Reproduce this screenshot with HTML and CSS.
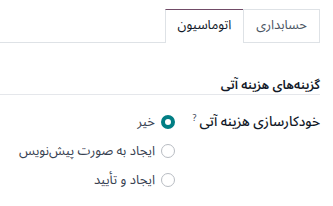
FILE: index.html
```html
<!DOCTYPE html>
<html lang="fa" dir="rtl">
<head>
<meta charset="utf-8">
<link rel="stylesheet" href="styles.css">
</head>
<body>

<div class="sheet">
  <ul class="tabs">
    <li class="tab">حسابداری</li>
    <li class="tab active">اتوماسیون</li>
  </ul>

  <div class="group">
    <h4 class="group-title">گزینه‌های هزینه آتی</h4>

    <div class="field">
      <label class="field-label">خودکارسازی هزینه آتی<sup>?</sup></label>
      <div class="radios">
        <label class="radio"><span class="dot checked"></span>خیر</label>
        <label class="radio"><span class="dot"></span>ایجاد به صورت پیش‌نویس</label>
        <label class="radio"><span class="dot"></span>ایجاد و تأیید</label>
      </div>
    </div>
  </div>
</div>

</body>
</html>
```

FILE: styles.css
```css
body {
    margin: 0;
    font: 13px "Noto Sans Arabic", "Noto Sans", "DejaVu Sans", sans-serif;
    color: #374151;
    background: #fff;
}

.sheet {
    padding: 9px 13px 0 0;
}

ul.tabs {
    display: flex;
    list-style: none;
    margin: 0;
    padding: 0;
    border-bottom: 1px solid #dee2e6;
}

li.tab {
    box-sizing: border-box;
    height: 33px;
    padding: 0 12px;
    line-height: 31px;
    border: 1px solid #dee2e6;
    border-bottom: none;
    color: #4b5563;
}

li.tab.active {
    border-top-color: #714b67;
    color: #111827;
    margin-bottom: -1px;
    height: 34px;
    background: #fff;
}

li.tab + li.tab {
    border-right: none;
}

.group {
    padding-top: 33px;
}

h4.group-title {
    margin: 0;
    font-size: 12.5px;
    line-height: 18px;
    font-weight: 600;
    color: #111827;
    border-bottom: 1px solid #e5e7eb;
}

.field {
    display: flex;
    padding-top: 17px;
}

.field-label {
    width: 145px;
    white-space: nowrap;
    font-weight: 500;
    font-size: 13.5px;
    color: #111827;
    line-height: 20px;
}

.field-label sup {
    font-weight: normal;
    font-size: 9px;
    line-height: 0;
    color: #374151;
    margin-right: 3px;
}

.radios {
    display: flex;
    flex-direction: column;
    gap: 9px;
}

label.radio {
    display: flex;
    align-items: center;
    gap: 6px;
    height: 20px;
    line-height: 20px;
}

span.dot {
    box-sizing: border-box;
    width: 14px;
    height: 14px;
    border-radius: 50%;
    border: 1px solid #b8bcc2;
    background: #fff;
}

span.dot.checked {
    border: 4px solid #017e84;
}
```
